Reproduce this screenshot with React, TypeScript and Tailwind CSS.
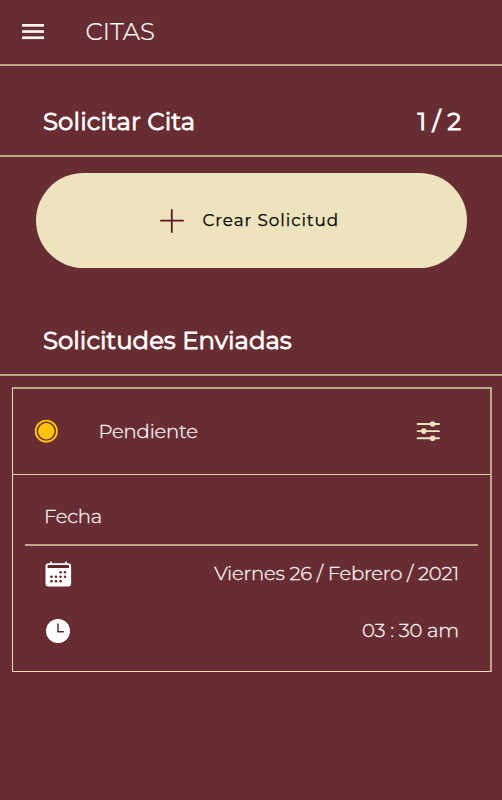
import React from "react";

function MenuIcon() {
  return (
    <svg width="22" height="16" viewBox="0 0 22 16" fill="#f8f4f3" className="block">
      <rect x="0" y="0" width="22" height="2.7" />
      <rect x="0" y="6.2" width="22" height="2.7" />
      <rect x="0" y="12.4" width="22" height="2.7" />
    </svg>
  );
}

function PlusIcon() {
  return (
    <svg width="24" height="24" viewBox="0 0 24 24" stroke="#5f1528" strokeWidth="1.8" strokeLinecap="round" className="block">
      <path d="M11.8 1v22M1 11.7h22" />
    </svg>
  );
}

function PendingIcon() {
  return (
    <svg width="24" height="24" viewBox="0 0 24 24" className="block">
      <circle cx="12.3" cy="12.2" r="10.6" fill="none" stroke="#ffc30b" strokeWidth="1.9" />
      <circle cx="12.3" cy="12.2" r="8.2" fill="#ffc30b" />
    </svg>
  );
}

function OptionsIcon() {
  return (
    <svg width="24" height="20" viewBox="0 0 24 20" fill="#ede3bc" stroke="#ede3bc" className="block">
      <path d="M1.6 3h21.4M1.6 10.1h21.4M1.6 17.2h21.4" strokeWidth="1.9" strokeLinecap="round" />
      <circle cx="16.6" cy="3" r="2.8" stroke="none" />
      <circle cx="7.8" cy="10.1" r="2.8" stroke="none" />
      <circle cx="16.6" cy="17.2" r="2.8" stroke="none" />
    </svg>
  );
}

function CalendarIcon() {
  return (
    <svg width="27" height="26" viewBox="0 0 27 26" className="block">
      <path fill="#fff" d="M5 1.4a1 1 0 0 1 2 0v.8h13v-.8a1 1 0 0 1 2 0v.8h1.1a3 3 0 0 1 3 3V22.5a3 3 0 0 1-3 3h-19.6a3 3 0 0 1-3-3V5.2a3 3 0 0 1 3-3H5z" />
      <rect x="2.6" y="4" width="21.4" height="3" rx=".5" fill="#652629" />
      <g fill="#652629">
        <circle cx="15.6" cy="11.3" r="1.3" /><circle cx="20" cy="11.3" r="1.3" />
        <circle cx="6.5" cy="15.8" r="1.3" /><circle cx="11" cy="15.8" r="1.3" />
        <circle cx="15.6" cy="15.8" r="1.3" /><circle cx="20" cy="15.8" r="1.3" />
        <circle cx="6.5" cy="20.2" r="1.3" /><circle cx="11" cy="20.2" r="1.3" />
        <circle cx="15.6" cy="20.2" r="1.3" />
      </g>
    </svg>
  );
}

function ClockIcon() {
  return (
    <svg width="24" height="24" viewBox="0 0 24 24" className="block">
      <circle cx="12" cy="12" r="12" fill="#fff" />
      <path d="M12 5v7.7h5.3" fill="none" stroke="#662a30" strokeWidth="1.5" strokeLinecap="round" strokeLinejoin="round" />
    </svg>
  );
}

const bodyText =
  "text-[19.6px] leading-none font-light tracking-[-0.18px] [-webkit-text-stroke:0.3px_#f5efed]";
const headingText =
  "text-[24.4px] leading-none font-normal [-webkit-text-stroke:0.8px_white]";

export default function App() {
  return (
    <div className="h-[800px] w-[502px] overflow-hidden bg-[#672d32] font-['Montserrat','Inter',sans-serif] text-white">
      <header className="flex h-[66px] items-center border-b-2 border-[#bda88a] pl-[22px]">
        <MenuIcon />
        <h1 className="ml-[41.5px] pb-0.5 text-[24.4px] leading-none font-light [-webkit-text-stroke:0.2px_white]">CITAS</h1>
      </header>

      <section>
        <div className={`flex h-[91px] items-center justify-between border-b-2 border-[#bda88a] pt-[21px] pr-[41px] pl-[43px] ${headingText}`}>
          <h2 className="tracking-[0.1px]">Solicitar Cita</h2>
          <span>1 / 2</span>
        </div>
        <button className="mt-4 ml-9 flex h-[95px] w-[431px] items-center rounded-[47.5px] bg-[#ede3bc] pl-[124px] text-black">
          <PlusIcon />
          <span className="ml-[18.5px] text-[16.8px] leading-none font-normal tracking-[0.95px] [-webkit-text-stroke:0.25px_black]">Crear Solicitud</span>
        </button>
      </section>

      <section>
        <h2 className={`flex h-[108px] items-center border-b-2 border-[#bda88a] pt-[39px] pl-[43px] ${headingText}`}>
          Solicitudes Enviadas
        </h2>
        <article className="mt-[11px] ml-3 h-[285px] w-[480px] border-t-2 border-r-2 border-b border-l border-t-[#bda88a] border-r-[#bda88a] border-b-[#efdfb9] border-l-[#efdfb9]">
          <div className="flex h-[86px] items-center border-b border-[#dfd0a9] pb-0.5 pl-[21px]">
            <PendingIcon />
            <span className={`ml-[40.5px] flex-1 pt-0.5 ${bodyText}`}>Pendiente</span>
            <div className="mr-[50px]"><OptionsIcon /></div>
          </div>
          <div className="mx-3">
            <h3 className={`flex h-[71px] items-center border-b-2 border-[#bda88a] pt-[15px] pl-[19px] ${bodyText}`}>Fecha</h3>
            <div className="flex h-14 items-center justify-between pr-[19px] pl-5">
              <CalendarIcon />
              <span className={bodyText}>Viernes 26 / Febrero / 2021</span>
            </div>
            <div className="flex h-[57px] items-center justify-between pr-[19px] pl-[21px]">
              <ClockIcon />
              <span className={bodyText}>03 : 30 am</span>
            </div>
          </div>
        </article>
      </section>
    </div>
  );
}
